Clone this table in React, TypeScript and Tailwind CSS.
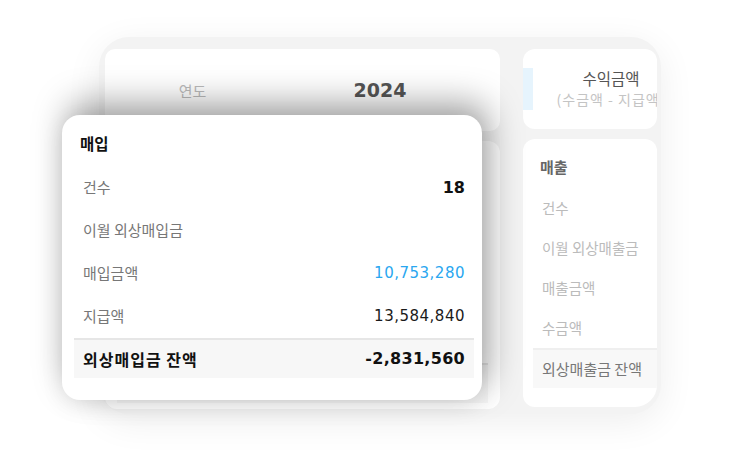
const KR = "font-['Noto_Sans_CJK_KR','Noto_Sans',sans-serif]";
const NUM = "font-['DejaVu_Sans','Noto_Sans_CJK_KR',sans-serif]";

const buyRows = [
  { label: "건수", value: "18", cls: "font-bold text-[16px] text-[#111]" },
  { label: "이월 외상매입금", value: "", cls: "" },
  { label: "매입금액", value: "10,753,280", cls: "text-[15px] text-[#2aa7f0] tracking-[0.5px]" },
  { label: "지급액", value: "13,584,840", cls: "text-[15px] text-[#1a1a1a] tracking-[0.5px]" },
];

const sellRows = ["건수", "이월 외상매출금", "매출금액", "수금액"];

function BuyCard() {
  return (
    <div className={`absolute left-[62px] top-[115px] w-[420px] h-[285px] bg-white rounded-[18px] pl-[12px] pr-[8px] pt-[18px] shadow-[6px_-12px_34px_rgba(0,0,0,0.36),0_6px_24px_rgba(0,0,0,0.07)] ${KR}`}>
      <div className="h-5 pl-[6px] text-[15.5px] leading-5 font-bold text-[#111]">매입</div>
      <div className="mt-[13px]">
        {buyRows.map((r) => (
          <div key={r.label} className="h-[43px] px-[9px] flex items-center justify-between">
            <span className="text-[15px] text-[#777]">{r.label}</span>
            <span className={`${NUM} ${r.cls}`}>{r.value}</span>
          </div>
        ))}
        <div className="h-[40px] px-[9px] flex items-center justify-between bg-[#f7f7f7] border-t-2 border-[#e6e6e6]">
          <span className="text-[16px] font-bold text-[#111] tracking-[1px]">외상매입금 잔액</span>
          <span className={`${NUM} text-[16px] font-bold text-[#111] tracking-[0.3px]`}>-2,831,560</span>
        </div>
      </div>
    </div>
  );
}

export default function App() {
  return (
    <div className={`relative w-[736px] h-[475px] bg-white overflow-hidden ${KR}`}>
      <div className="pl-[99px] pt-[37px]">
        <div className="w-[562px] h-[377px] bg-[#f3f3f3] rounded-[30px] shadow-[0_8px_36px_rgba(0,0,0,0.07)] pl-[6px] pt-[12px] flex gap-[23px] overflow-hidden">
          {/* left column */}
          <div className="w-[395px] flex flex-col gap-[10px]">
            <div className="h-[82px] bg-white rounded-[10px] flex items-center">
              <div className="w-[175px] text-center text-[15px] text-[#bbb] pt-[2px]">연도</div>
              <div className={`w-[200px] text-center text-[19px] font-bold text-[#555] ${NUM}`}>2024</div>
            </div>
            <div className="h-[268px] bg-white rounded-[12px] px-[12px] pt-[20px]">
              <div className="h-5 text-[15px] font-bold text-[#555]">매입</div>
              <div className="mt-[10px]">
                {[0, 1, 2, 3].map((i) => (
                  <div key={i} className="h-[43px]" />
                ))}
                <div className="h-[40px] bg-[#f7f7f7] border-t-2 border-[#e6e6e6]" />
              </div>
            </div>
          </div>

          {/* right column */}
          <div className="w-[134px] flex flex-col gap-[10px]">
            <div className="h-[80px] bg-white rounded-[12px] pt-[19px] flex overflow-hidden">
              <div className="w-[10px] h-[42px] bg-[#e6f4fd] shrink-0" />
              <div className="w-[156px] shrink-0 text-center whitespace-nowrap">
                <div className="text-[15.5px] text-[#555] leading-[21px]">수익금액</div>
                <div className="text-[14px] tracking-[1px] text-[#c4c4c4] leading-[20px]">(수금액 - 지급액)</div>
              </div>
            </div>
            <div className="h-[268px] bg-white rounded-[12px] rounded-br-[22px] pl-[10px] pt-[18px] overflow-hidden whitespace-nowrap">
              <div className="pl-[7px] h-5 text-[15px] font-bold text-[#666] leading-5">매출</div>
              <div className="mt-[11px]">
                {sellRows.map((l) => (
                  <div key={l} className="h-[40px] pl-[9px] flex items-center text-[14.5px] text-[#bbb]">
                    {l}
                  </div>
                ))}
                <div className="h-[40px] pl-[9px] flex items-center bg-[#f8f8f8] border-t-2 border-[#efefef] text-[15px] text-[#777]">
                  외상매출금 잔액
                </div>
              </div>
            </div>
          </div>
        </div>
      </div>
      <BuyCard />
    </div>
  );
}
